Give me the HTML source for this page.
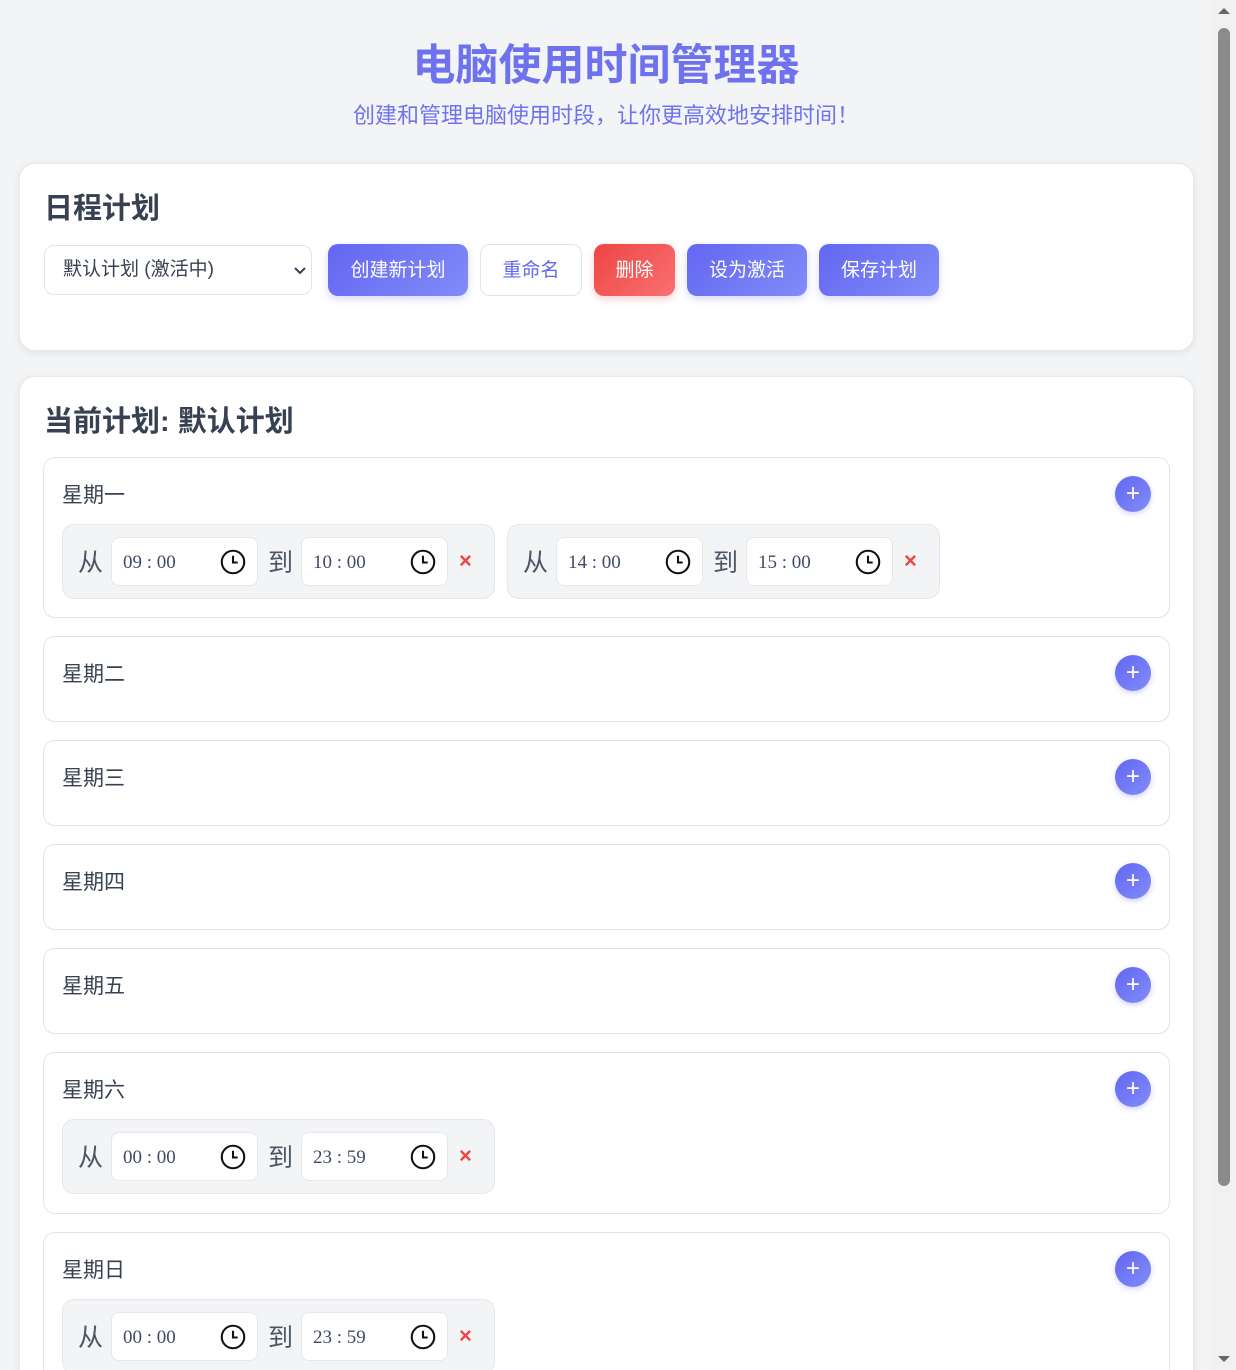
<!DOCTYPE html>
<html><head><meta charset="utf-8"><style>
*{box-sizing:border-box;margin:0;padding:0}
html,body{width:1236px;height:1370px;overflow:hidden}
body{background:#f3f4f6;font-family:"Liberation Sans","Noto Sans CJK SC",sans-serif;color:#374151;position:relative}
.abs{position:absolute}
h1{position:absolute;left:0;width:1212px;top:39px;text-align:center;font-size:43px;font-weight:700;color:#6f72ef;line-height:54px}
.sub{position:absolute;left:0;width:1212px;top:101px;text-align:center;font-size:22px;color:#6f72ef;line-height:30px}
.card{position:absolute;left:19px;width:1175px;background:#fff;border-radius:16px;box-shadow:0 2px 8px rgba(0,0,0,.08);border:1px solid #e8e9ec}
.h2{position:absolute;left:24px;font-size:29px;font-weight:700;color:#374151;line-height:36px}
.sel{position:absolute;left:44px;top:245px;width:268px;height:50px;border:1px solid #e2e4e8;border-radius:10px;background:#fff;font-size:19px;line-height:48px;padding-left:18px;color:#374151}
.btn{position:absolute;top:244px;height:52px;border-radius:10px;font-size:19px;line-height:54px;text-align:center;color:#fff;background:linear-gradient(135deg,#6366f1,#818cf8);box-shadow:0 3px 8px rgba(99,102,241,.25)}
.day{position:absolute;left:43px;width:1127px;border:1px solid #e3e5e8;border-radius:12px;background:#fff}
.dl{position:absolute;left:18px;top:25px;font-size:21px;line-height:26px;color:#374151}
.plus{position:absolute;left:1071px;top:18px;width:36px;height:36px;border-radius:50%;background:linear-gradient(135deg,#6366f1,#818cf8);color:#fff;font-size:24px;line-height:35px;text-align:center;box-shadow:0 2px 6px rgba(99,102,241,.3)}
.slot{position:absolute;top:66px;width:433px;height:75px;background:#f3f4f6;border:1px solid #e5e7eb;border-radius:12px}
.zh{position:absolute;top:24px;font-size:25px;line-height:28px;color:#4b5563}
.inp{position:absolute;top:12px;width:147px;height:49px;background:#fff;border:1px solid #e5e7eb;border-radius:8px}
.t{position:absolute;left:11px;top:13px;font-family:"Liberation Serif","Noto Serif CJK SC",serif;font-size:19px;line-height:24px;color:#3f4a6b}
.clk{position:absolute;left:108px;top:11px}
.x{position:absolute;left:396px;top:22px;color:#ef4444;font-size:22px;line-height:28px;font-weight:700}
</style></head><body>
<h1>电脑使用时间管理器</h1>
<div class="sub">创建和管理电脑使用时段，让你更高效地安排时间！</div>

<div class="card" style="top:163px;height:188px">
<div class="h2" style="top:27px">日程计划</div>
</div>
<div class="sel">默认计划 (激活中)<svg class="abs" style="left:248px;top:20px" width="14" height="10" viewBox="0 0 14 10"><path d="M2 2l5 5 5-5" stroke="#374151" stroke-width="2" fill="none"/></svg></div>
<div class="btn" style="left:328px;width:140px">创建新计划</div>
<div class="btn" style="left:480px;width:102px;background:#fff;color:#6366f1;border:1px solid #e2e4e8;box-shadow:none;line-height:52px">重命名</div>
<div class="btn" style="left:594px;width:81px;background:linear-gradient(135deg,#ef4444,#f87171);box-shadow:0 3px 8px rgba(239,68,68,.25)">删除</div>
<div class="btn" style="left:687px;width:120px">设为激活</div>
<div class="btn" style="left:819px;width:120px">保存计划</div>

<div class="card" style="top:376px;height:1020px">
<div class="h2" style="top:27px">当前计划: 默认计划</div>
</div>

<div class="day" style="top:457px;height:161px"><div class="dl">星期一</div><div class="plus">+</div>
<div class="slot" style="left:18px"><div class="zh" style="left:15px">从</div><div class="inp" style="left:48px"><div class="t">09 : 00</div><svg class="clk" width="26" height="26" viewBox="0 0 25 25"><circle cx="12.5" cy="12.5" r="10.8" stroke="#111" stroke-width="2" fill="none"/><path d="M12.5 6.5v6.5h4.5" stroke="#111" stroke-width="2" fill="none"/></svg></div><div class="zh" style="left:205px">到</div><div class="inp" style="left:238px"><div class="t">10 : 00</div><svg class="clk" width="26" height="26" viewBox="0 0 25 25"><circle cx="12.5" cy="12.5" r="10.8" stroke="#111" stroke-width="2" fill="none"/><path d="M12.5 6.5v6.5h4.5" stroke="#111" stroke-width="2" fill="none"/></svg></div><div class="x">×</div></div>
<div class="slot" style="left:463px"><div class="zh" style="left:15px">从</div><div class="inp" style="left:48px"><div class="t">14 : 00</div><svg class="clk" width="26" height="26" viewBox="0 0 25 25"><circle cx="12.5" cy="12.5" r="10.8" stroke="#111" stroke-width="2" fill="none"/><path d="M12.5 6.5v6.5h4.5" stroke="#111" stroke-width="2" fill="none"/></svg></div><div class="zh" style="left:205px">到</div><div class="inp" style="left:238px"><div class="t">15 : 00</div><svg class="clk" width="26" height="26" viewBox="0 0 25 25"><circle cx="12.5" cy="12.5" r="10.8" stroke="#111" stroke-width="2" fill="none"/><path d="M12.5 6.5v6.5h4.5" stroke="#111" stroke-width="2" fill="none"/></svg></div><div class="x">×</div></div>
</div>
<div class="day" style="top:636px;height:86px"><div class="dl">星期二</div><div class="plus">+</div></div>
<div class="day" style="top:740px;height:86px"><div class="dl">星期三</div><div class="plus">+</div></div>
<div class="day" style="top:844px;height:86px"><div class="dl">星期四</div><div class="plus">+</div></div>
<div class="day" style="top:948px;height:86px"><div class="dl">星期五</div><div class="plus">+</div></div>
<div class="day" style="top:1052px;height:162px"><div class="dl">星期六</div><div class="plus">+</div>
<div class="slot" style="left:18px"><div class="zh" style="left:15px">从</div><div class="inp" style="left:48px"><div class="t">00 : 00</div><svg class="clk" width="26" height="26" viewBox="0 0 25 25"><circle cx="12.5" cy="12.5" r="10.8" stroke="#111" stroke-width="2" fill="none"/><path d="M12.5 6.5v6.5h4.5" stroke="#111" stroke-width="2" fill="none"/></svg></div><div class="zh" style="left:205px">到</div><div class="inp" style="left:238px"><div class="t">23 : 59</div><svg class="clk" width="26" height="26" viewBox="0 0 25 25"><circle cx="12.5" cy="12.5" r="10.8" stroke="#111" stroke-width="2" fill="none"/><path d="M12.5 6.5v6.5h4.5" stroke="#111" stroke-width="2" fill="none"/></svg></div><div class="x">×</div></div>
</div>
<div class="day" style="top:1232px;height:162px"><div class="dl">星期日</div><div class="plus">+</div>
<div class="slot" style="left:18px"><div class="zh" style="left:15px">从</div><div class="inp" style="left:48px"><div class="t">00 : 00</div><svg class="clk" width="26" height="26" viewBox="0 0 25 25"><circle cx="12.5" cy="12.5" r="10.8" stroke="#111" stroke-width="2" fill="none"/><path d="M12.5 6.5v6.5h4.5" stroke="#111" stroke-width="2" fill="none"/></svg></div><div class="zh" style="left:205px">到</div><div class="inp" style="left:238px"><div class="t">23 : 59</div><svg class="clk" width="26" height="26" viewBox="0 0 25 25"><circle cx="12.5" cy="12.5" r="10.8" stroke="#111" stroke-width="2" fill="none"/><path d="M12.5 6.5v6.5h4.5" stroke="#111" stroke-width="2" fill="none"/></svg></div><div class="x">×</div></div>
</div>

<div class="abs" style="left:1212px;top:0;width:24px;height:1370px;background:#f1f1f1"></div>
<div class="abs" style="left:1218px;top:28px;width:12px;height:1158px;background:#8b8b8b;border-radius:6px"></div>
<svg class="abs" style="left:1216px;top:6px" width="16" height="10"><path d="M2 8l6-6 6 6z" fill="#666"/></svg>
<svg class="abs" style="left:1216px;top:1354px" width="16" height="10"><path d="M2 2l6 6 6-6z" fill="#666"/></svg>
</body></html>
